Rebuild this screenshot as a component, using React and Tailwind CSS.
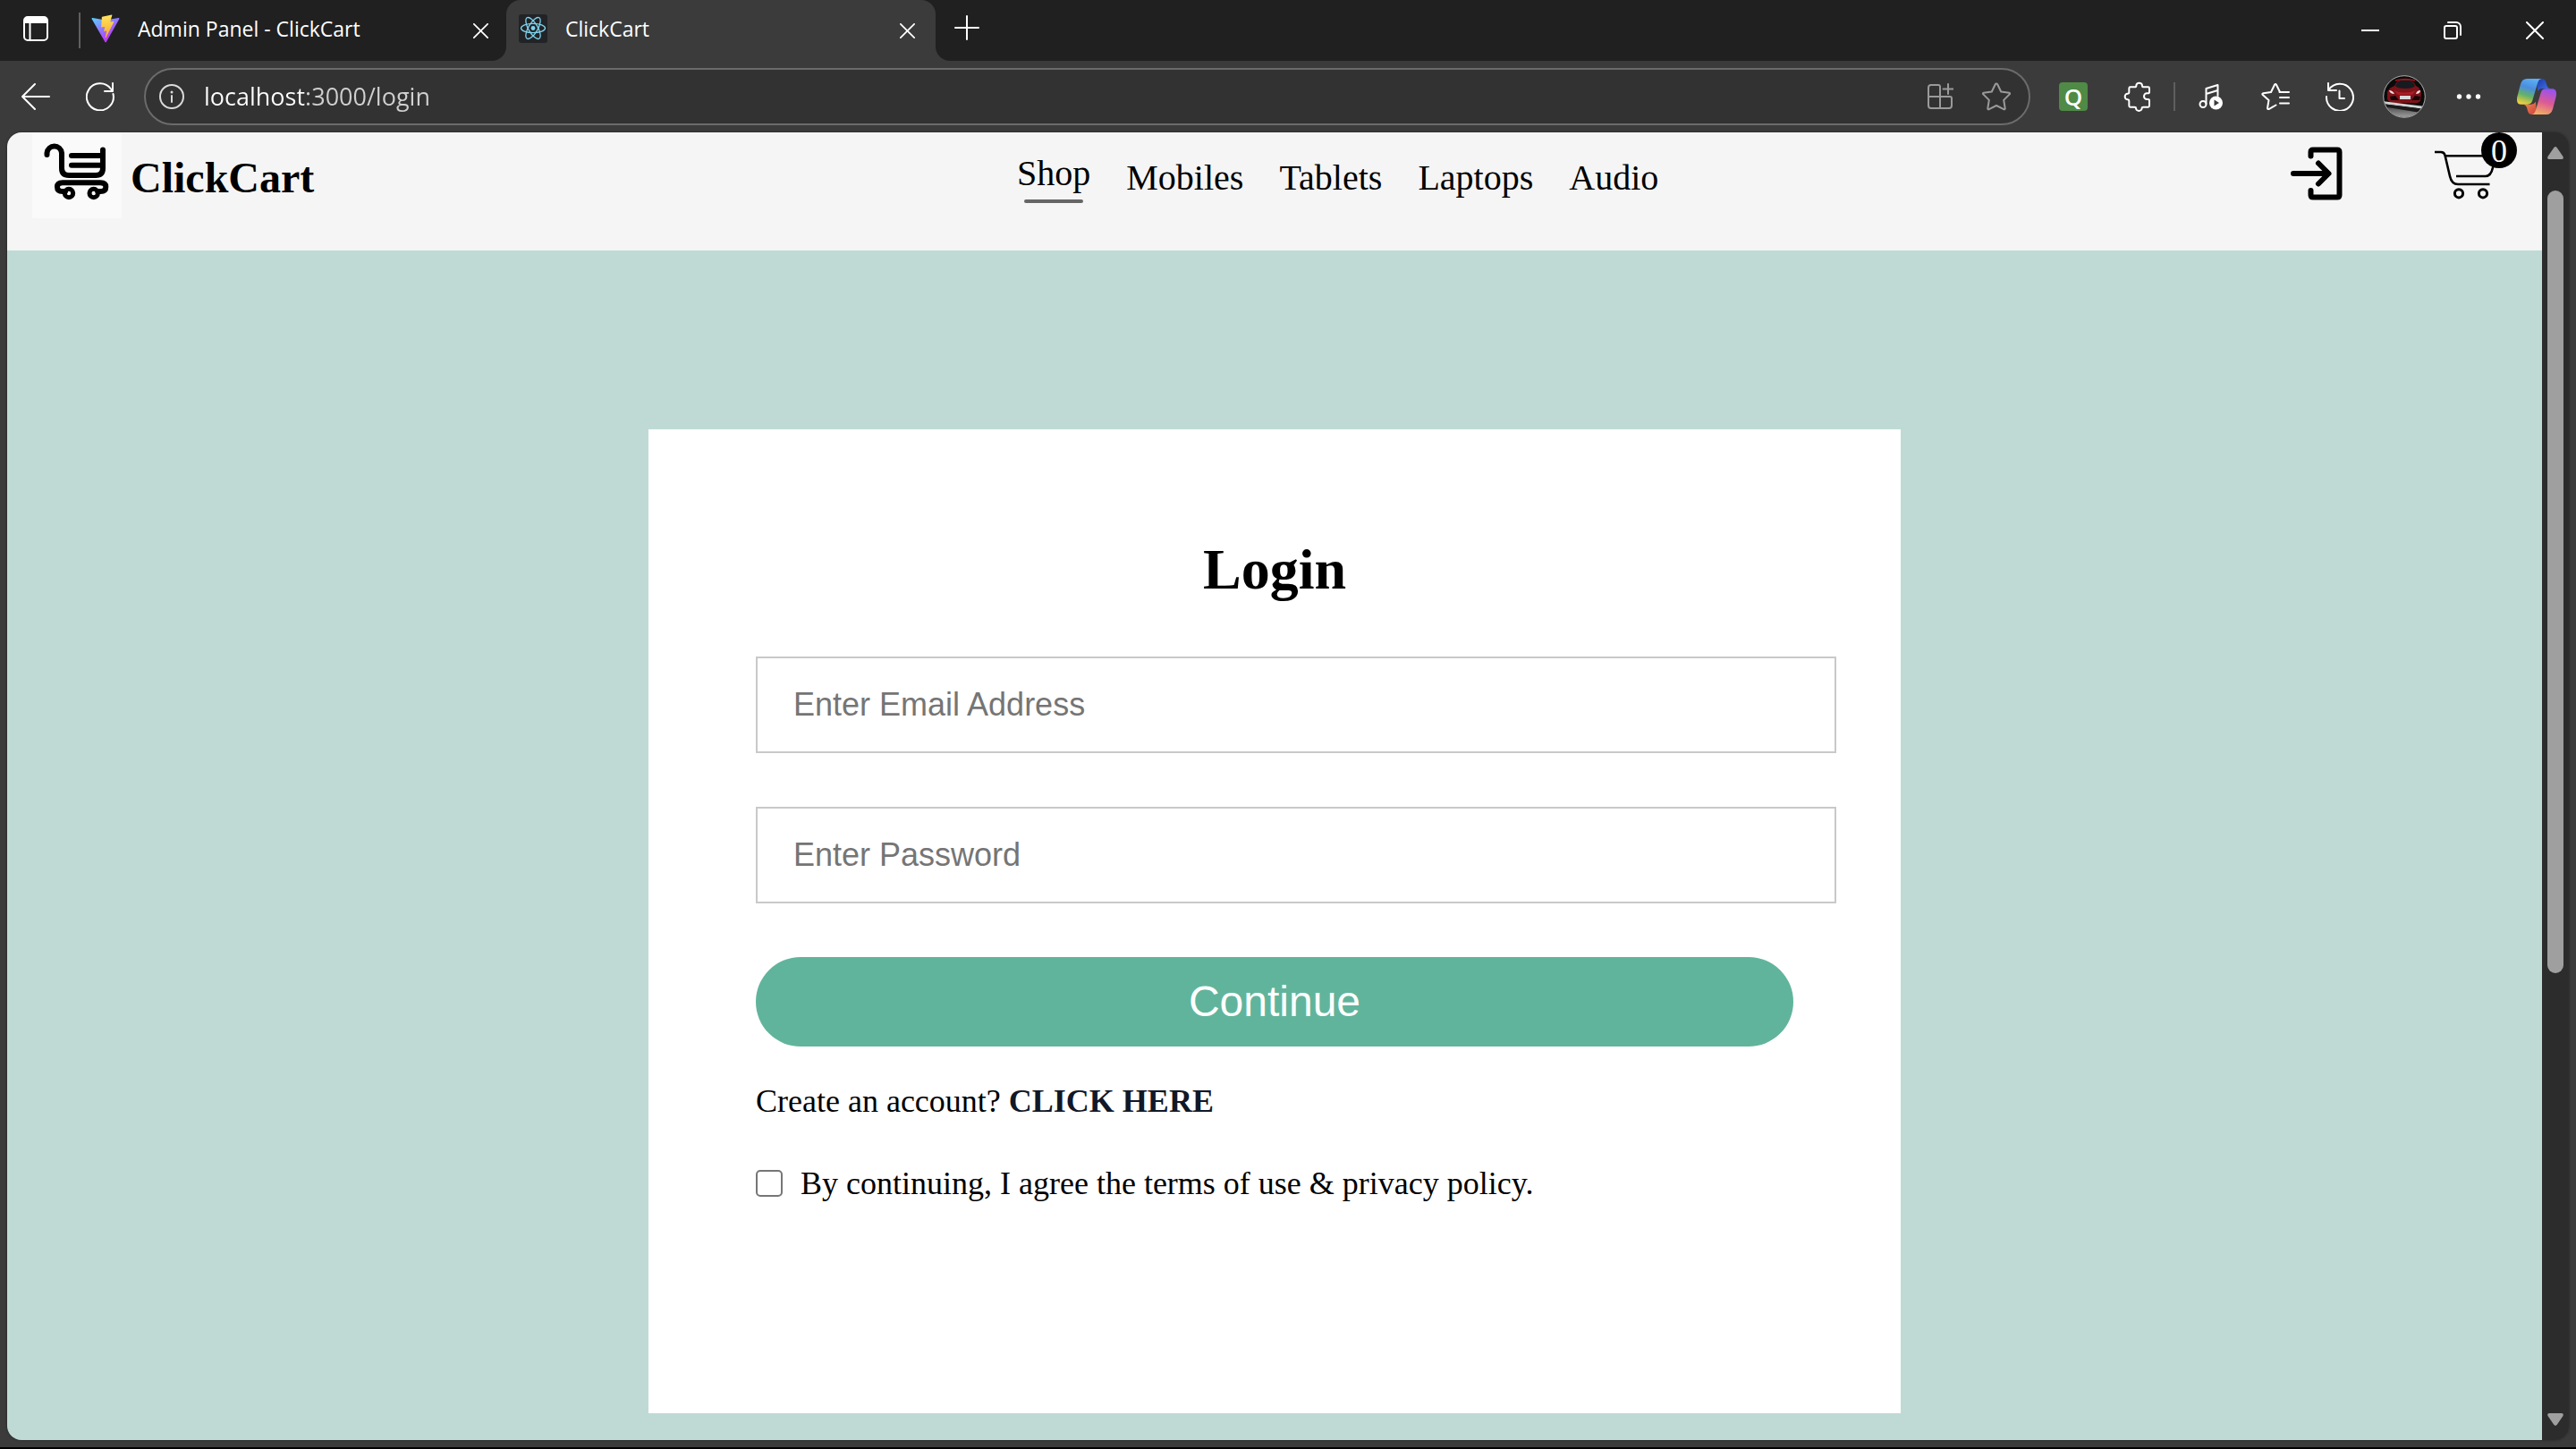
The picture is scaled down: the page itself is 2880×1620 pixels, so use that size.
import React from "react";

const line = {
  fill: "none",
  stroke: "currentColor",
  strokeLinecap: "round",
  strokeLinejoin: "round",
};

function WorkspacesIcon() {
  return (
    <svg width="28" height="28" viewBox="0 0 28 28" aria-hidden="true">
      <rect x="1" y="1" width="26" height="26" rx="4" {...line} strokeWidth="2" />
      <path d="M1 8V5a4 4 0 0 1 4-4h18a4 4 0 0 1 4 4v3z" fill="currentColor" />
      <path d="M7.500 8v19" {...line} strokeWidth="2" />
    </svg>
  );
}

function ViteIcon() {
  return (
    <svg width="32" height="32" viewBox="1.500 1.500 29 29" aria-hidden="true">
      <defs>
        <linearGradient id="vite-a" x1="6" x2="19" y1="5" y2="26" gradientUnits="userSpaceOnUse">
          <stop stopColor="#5cc8ff" />
          <stop offset="0.500" stopColor="#8f7bff" />
          <stop offset="1" stopColor="#b83bf6" />
        </linearGradient>
        <linearGradient id="vite-b" x1="16" x2="19" y1="3" y2="23" gradientUnits="userSpaceOnUse">
          <stop stopColor="#ffe25e" />
          <stop offset="1" stopColor="#f5ad2e" />
        </linearGradient>
      </defs>
      <path
        fill="url(#vite-a)"
        d="M29.8836 6.146L16.7418 29.6457c-.2714.4851-.9684.488-1.2437.0052L2.0956 6.1482c-.2999-.5262.1498-1.1635.746-1.057l13.156 2.3516a.7144.7144 0 0 0 .2537-.0004l12.8808-2.3478c.5942-.1083 1.0463.5241.7515 1.0513z"
      />
      <path
        fill="url(#vite-b)"
        d="M22.2644 2.0069l-9.7253 1.9056a.3571.3571 0 0 0-.2879.3294l-.5982 10.1038c-.014.238.2045.4227.4367.3691l2.7077-.6248c.2534-.0585.4823.1647.4302.4194l-.8044 3.9393c-.0542.265.1947.4918.4536.4132l1.6724-.5082c.2593-.0787.5084.1487.4536.414l-1.2784 6.1877c-.08.387.4348.598.6495.2662L16.5173 25 24.4415 9.1859c.1327-.2648-.096-.5667-.387-.5106l-2.7869.5379c-.262.0505-.4848-.1934-.4109-.4497l1.819-6.3054c.074-.2572-.15-.5013-.4113-.4512z"
      />
    </svg>
  );
}

function ReactIcon() {
  return (
    <svg width="32" height="32" viewBox="0 0 32 32" aria-hidden="true">
      <rect width="32" height="32" rx="3" fill="#222326" />
      <g transform="translate(16 15.500)" fill="none" stroke="#7fd3ee" strokeWidth="1.300">
        <circle r="2.400" fill="#7fd3ee" stroke="none" />
        <ellipse rx="13.500" ry="5.200" />
        <ellipse rx="13.500" ry="5.200" transform="rotate(60)" />
        <ellipse rx="13.500" ry="5.200" transform="rotate(120)" />
      </g>
    </svg>
  );
}

function CrossIcon({ size }) {
  return (
    <svg width={size} height={size} viewBox="0 0 20 20" aria-hidden="true">
      <path d="M1 1l18 18M19 1L1 19" {...line} strokeWidth="2" />
    </svg>
  );
}

function PlusIcon() {
  return (
    <svg width="28" height="28" viewBox="0 0 28 28" aria-hidden="true">
      <path d="M14 1v26M1 14h26" {...line} strokeWidth="2" />
    </svg>
  );
}

function MinimizeIcon() {
  return (
    <svg width="20" height="20" viewBox="0 0 20 20" aria-hidden="true">
      <path d="M0 10h20" stroke="currentColor" strokeWidth="2" />
    </svg>
  );
}

function RestoreIcon() {
  return (
    <svg width="20" height="20" viewBox="0 0 20 20" aria-hidden="true">
      <rect x="1" y="5" width="14" height="14" rx="2" {...line} strokeWidth="2" />
      <path d="M5 1h9a5 5 0 0 1 5 5v9" {...line} strokeWidth="2" />
    </svg>
  );
}

function BackIcon() {
  return (
    <svg width="32" height="32" viewBox="0 0 32 32" aria-hidden="true">
      <path d="M15 2L1 16l14 14M1 16h30" {...line} strokeWidth="2" />
    </svg>
  );
}

function RefreshIcon() {
  return (
    <svg width="32" height="32" viewBox="0 0 32 32" aria-hidden="true">
      <path d="M30.500 13A15 15 0 1 1 28 7.500l2 2.500M30 1v9h-9" {...line} strokeWidth="2" />
    </svg>
  );
}

function InfoIcon() {
  return (
    <svg width="28" height="28" viewBox="0 0 28 28" aria-hidden="true">
      <circle cx="14" cy="14" r="13" {...line} strokeWidth="2" />
      <path d="M14 13v7" {...line} strokeWidth="2" />
      <circle cx="14" cy="9" r="1.500" fill="currentColor" />
    </svg>
  );
}

function AppsIcon() {
  return (
    <svg width="30" height="30" viewBox="0 0 30 30" aria-hidden="true">
      <path
        d="M15 15H2V5a3 3 0 0 1 3-3h8a2 2 0 0 1 2 2zM15 15h11a2 2 0 0 1 2 2v8a3 3 0 0 1-3 3h-10zM2 15v10a3 3 0 0 0 3 3h10V15M24 1v11M18.500 6.500h11"
        {...line}
        strokeWidth="2"
      />
    </svg>
  );
}

function StarIcon() {
  return (
    <svg width="32" height="32" viewBox="0 0 32 32" aria-hidden="true">
      <path
        d="M16 1.500q.8 0 1.200.8l4 8.200 9 1.300q1.500.4.500 1.600l-6.500 6.500 1.500 9.200q.1 1.700-1.500 1.100L16 26l-8.200 4.200q-1.600.6-1.500-1.100l1.500-9.200-6.500-6.500q-1-1.200.5-1.600l9-1.300 4-8.200q.4-.8 1.200-.8z"
        {...line}
        strokeWidth="2"
      />
    </svg>
  );
}

function PuzzleIcon() {
  return (
    <svg width="32" height="34" viewBox="764 92 96 102" aria-hidden="true">
      <path
        d="M788 111h14q5 0 5-5a10 9 0 0 1 20 0q0 5 5 5h15q4 0 4 4v13q0 4-5 4h-3a10 10 0 0 0 0 20h3q5 0 5 4v18q0 4-4 4h-16q-5 0-5 4a10 9 0 0 1-20 0q0-4-5-4h-14q-4 0-4-4v-16q0-5-5-5a9 10 0 0 1 0-20q5 0 5-4v-14q0-4 4-4z"
        {...line}
        strokeWidth="6"
      />
    </svg>
  );
}

function MusicIcon() {
  return (
    <svg width="28" height="30" viewBox="0 0 28 30" aria-hidden="true">
      <circle cx="5" cy="23.500" r="3.500" {...line} strokeWidth="2" />
      <path d="M8.500 23V6l13-4v12M8.500 12l13-4" {...line} strokeWidth="2" />
      <circle cx="19.500" cy="22" r="7.500" fill="currentColor" />
      <path d="M17.500 18.500v7l5.500-3.500z" fill="#3b3b3b" />
    </svg>
  );
}

function FavoritesIcon() {
  return (
    <svg width="32" height="32" viewBox="0 0 32 32" aria-hidden="true">
      <path
        d="M16.500 25.500L9 29.800q-2.200.9-1.900-1.300L8.500 20 1.700 14q-1-1.400.8-1.800l8.500-1.200L15 2.800q1-1.600 2 0l3.800 7.700"
        {...line}
        strokeWidth="2"
      />
      <path d="M20.500 11H31M21 17h10M21 23.500h10" {...line} strokeWidth="2" />
    </svg>
  );
}

function HistoryIcon() {
  return (
    <svg width="32" height="32" viewBox="0 0 32 32" aria-hidden="true">
      <path d="M3 1v8h9M3.500 8.500A15 15 0 1 1 1 16M15.500 9.500V18H21" {...line} strokeWidth="2" />
    </svg>
  );
}

function AvatarIcon() {
  return (
    <svg width="48" height="48" viewBox="0 0 48 48" aria-hidden="true">
      <defs>
        <clipPath id="avatar-clip">
          <circle cx="24" cy="24" r="23" />
        </clipPath>
        <linearGradient id="avatar-road" x1="0" y1="0" x2="0" y2="1">
          <stop stopColor="#4a4a4a" />
          <stop offset="1" stopColor="#a5a5a5" />
        </linearGradient>
      </defs>
      <g clipPath="url(#avatar-clip)">
        <rect width="48" height="48" fill="#0a0a0a" />
        <path d="M5 19q2-5 8-7 3-6 7-7h10q5 2 7 7 5 2 6 8l-1 9q-3 3-8 2H13q-6 0-8-4z" fill="#7d1219" />
        <path d="M14 12q2-5 6-6h10q4 1 6 6-2 3-11 3t-11-3z" fill="#161b20" />
        <path d="M14 6q11-3 22 0" stroke="#a3161f" strokeWidth="1.500" fill="none" />
        <path d="M12 17q12 5 25 0l-4 5H17z" fill="#a91c25" />
        <path d="M7 17q4 0 6 4-5 0-6-4zM42 17q-4 0-5 4 5 0 5-4z" fill="#f1dfdf" />
        <path d="M8 24l6-1 4 5H9zM42 24l-6-1-4 5h9z" fill="#150507" />
        <rect x="19" y="23" width="12" height="4" fill="#d8d8d8" />
        <path d="M0 29l48 6v3L0 32z" fill="#d0d0d0" />
        <path d="M0 32l48 6v5L0 35z" fill="#1b1b1b" />
        <path d="M0 35l48 8v5H0z" fill="url(#avatar-road)" />
      </g>
      <circle cx="24" cy="24" r="23.300" fill="none" stroke="#a9a9a9" strokeWidth="1" />
    </svg>
  );
}

function MoreIcon() {
  return (
    <svg width="28" height="8" viewBox="0 0 28 8" aria-hidden="true" fill="currentColor">
      <circle cx="3.500" cy="4" r="2.700" />
      <circle cx="14" cy="4" r="2.700" />
      <circle cx="24.500" cy="4" r="2.700" />
    </svg>
  );
}

function CopilotIcon() {
  return (
    <svg width="44" height="40" viewBox="0 0 132 120" aria-hidden="true">
      <defs>
        <linearGradient id="cp-left" x1="0.600" y1="0" x2="0.300" y2="1">
          <stop stopColor="#5cb0f2" />
          <stop offset="0.350" stopColor="#4a8de0" />
          <stop offset="0.650" stopColor="#62b06c" />
          <stop offset="1" stopColor="#f0cf3c" />
        </linearGradient>
        <linearGradient id="cp-right" x1="0.600" y1="0" x2="0.300" y2="1">
          <stop stopColor="#9a52ee" />
          <stop offset="0.500" stopColor="#dd5a94" />
          <stop offset="1" stopColor="#f3b060" />
        </linearGradient>
        <linearGradient id="cp-top" x1="0" y1="0" x2="1" y2="1">
          <stop stopColor="#1f35a8" />
          <stop offset="1" stopColor="#3f7df0" />
        </linearGradient>
        <linearGradient id="cp-bottom" x1="0" y1="0" x2="1" y2="1">
          <stop stopColor="#f0914f" />
          <stop offset="1" stopColor="#cf3f3f" />
        </linearGradient>
      </defs>
      <path d="M66 0h18q9 0 12 9l5 15q3 9 12 9H84q-9 0-14 10z" fill="url(#cp-top)" />
      <path d="M66 120H50q-10 0-13-9l-4-14q-3-10-14-11h28q10 0 16-9z" fill="url(#cp-bottom)" />
      <path d="M34 0h48q-9 2-12 12L52 73q-4 13-16 13H14Q-4 86 1 60L12 18Q17 0 34 0z" fill="url(#cp-left)" />
      <path d="M98 120H50q9-2 12-12l18-61q4-13 16-13h22q18 0 13 26l-11 42q-5 18-22 18z" fill="url(#cp-right)" />
    </svg>
  );
}

function CartLogo() {
  return (
    <svg width="100" height="96" viewBox="0 0 100 96" role="img" aria-label="ClickCart logo">
      <rect width="100" height="96" fill="#fafafa" />
      <g fill="none" stroke="#000" strokeWidth="6" strokeLinecap="round" strokeLinejoin="round">
        <path d="M16.500 25v-2a8.300 8.300 0 0 1 16.500 0v17q0 8 8 8h30q8 0 8-8V19.500" />
        <path d="M44 26h32q3 0 3-3M44 36.700h32q3 0 3-3" />
        <path d="M37 66h-3q-6 0-6-5 0-4.700 6-4.700h42.300q6 0 6 4.700 0 5-6 5h-3" />
        <circle cx="41" cy="68" r="4.700" strokeWidth="5" />
        <circle cx="68.700" cy="68" r="4.700" strokeWidth="5" />
      </g>
    </svg>
  );
}

function LoginIcon() {
  return (
    <svg width="60" height="60" viewBox="0 0 60 60" aria-hidden="true">
      <g fill="none" stroke="#000" strokeWidth="6" strokeLinecap="round" strokeLinejoin="round">
        <path d="M23.500 10.500V6q0-2.500 2.500-2.500h27q2.500 0 2.500 2.500v48q0 2.500-2.500 2.500H26q-2.500 0-2.500-2.500v-5" />
        <path d="M4 30h38M32 18.500L43.500 30 32 41.500" />
      </g>
    </svg>
  );
}

function CartIcon() {
  return (
    <svg width="70" height="58" viewBox="0 0 70 58" aria-hidden="true">
      <g fill="none" stroke="#000" strokeWidth="2.600">
        <path d="M0 4h7q3.500 0 4.500 3.500L17 31q2 9 9 9h35.500" />
        <path d="M12 8.300h57l-4 13q-2 9.700-8 9.700H24" />
        <circle cx="27" cy="50.300" r="4.600" strokeWidth="3" />
        <circle cx="54" cy="50.300" r="4.600" strokeWidth="3" />
      </g>
    </svg>
  );
}

function ToolButton({ label, children, wide }) {
  return (
    <button
      type="button"
      aria-label={label}
      className={
        wide
          ? "flex h-16 w-20 items-center justify-center"
          : "flex h-16 w-18 items-center justify-center"
      }
    >
      {children}
    </button>
  );
}

function TabStrip() {
  return (
    <div className="flex h-[68px] items-stretch bg-[#202020] text-[23px] text-white">
      <button type="button" aria-label="Tab actions" className="flex w-[88px] items-center pb-1 pl-[26px]">
        <WorkspacesIcon />
      </button>
      <div className="h-10 w-[2px] self-center bg-[#5f5f5f]" />
      <div className="flex w-[476px] items-center gap-5 pr-5 pb-1 pl-3">
        <ViteIcon />
        <span className="flex-1 truncate">Admin Panel - ClickCart</span>
        <button type="button" aria-label="Close Admin Panel tab" className="pt-1">
          <CrossIcon size="17" />
        </button>
      </div>
      <div className="relative flex w-[480px] items-center gap-5 rounded-t-2xl bg-[#3b3b3b] pr-[23px] pb-1 pl-[14px]">
        <span className="absolute bottom-0 -left-4 size-4 bg-[#3b3b3b]">
          <span className="block size-4 rounded-br-2xl bg-[#202020]" />
        </span>
        <span className="absolute -right-4 bottom-0 size-4 bg-[#3b3b3b]">
          <span className="block size-4 rounded-bl-2xl bg-[#202020]" />
        </span>
        <ReactIcon />
        <span className="flex-1 truncate">ClickCart</span>
        <button type="button" aria-label="Close ClickCart tab" className="pt-1">
          <CrossIcon size="17" />
        </button>
      </div>
      <button type="button" aria-label="New tab" className="flex w-[70px] items-center justify-center pb-[6px]">
        <PlusIcon />
      </button>
      <div className="ml-auto flex">
        <button type="button" aria-label="Minimize" className="flex w-[92px] items-center justify-center">
          <MinimizeIcon />
        </button>
        <button type="button" aria-label="Restore" className="flex w-[92px] items-center justify-center">
          <RestoreIcon />
        </button>
        <button type="button" aria-label="Close window" className="flex w-[92px] items-center justify-center">
          <CrossIcon size="20" />
        </button>
      </div>
    </div>
  );
}

function Toolbar() {
  return (
    <div className="flex h-20 items-center bg-[#3b3b3b] px-1 text-white">
      <ToolButton label="Back">
        <BackIcon />
      </ToolButton>
      <ToolButton label="Refresh">
        <RefreshIcon />
      </ToolButton>
      <div className="ml-[13px] flex h-16 flex-1 items-center rounded-full border-2 border-[#6b6b6b] bg-[#323232] pr-5 pl-[15px]">
        <button type="button" aria-label="Site information" className="text-[#dadada]">
          <InfoIcon />
        </button>
        <input
          type="text"
          aria-label="Address"
          defaultValue="localhost:3000/login"
          className="ml-[22px] min-w-0 flex-1 bg-linear-to-r from-white from-[112px] to-[#d0d0d0] to-[112px] bg-clip-text text-[27px] text-transparent outline-none"
        />
        <button type="button" aria-label="Install app" className="text-[#9a9a9a]">
          <AppsIcon />
        </button>
        <button type="button" aria-label="Add to favorites" className="ml-8 text-[#9a9a9a]">
          <StarIcon />
        </button>
      </div>
      <div className="ml-3 flex items-center">
        <ToolButton label="Q extension">
          <span className="flex size-8 items-center justify-center rounded-sm bg-[#4f8a46] text-[26px] leading-8 font-semibold">
            Q
          </span>
        </ToolButton>
        <ToolButton label="Extensions">
          <PuzzleIcon />
        </ToolButton>
        <div className="mx-1 h-8 w-[2px] bg-[#5f5f5f]" />
        <ToolButton label="Media">
          <MusicIcon />
        </ToolButton>
        <ToolButton label="Favorites">
          <FavoritesIcon />
        </ToolButton>
        <ToolButton label="History">
          <HistoryIcon />
        </ToolButton>
        <ToolButton label="Profile">
          <AvatarIcon />
        </ToolButton>
        <ToolButton label="Settings and more">
          <MoreIcon />
        </ToolButton>
        <ToolButton label="Copilot" wide>
          <CopilotIcon />
        </ToolButton>
      </div>
    </div>
  );
}

function SiteHeader() {
  return (
    <header className="flex h-[132px] items-center justify-between bg-[#f5f5f5] px-7 pb-[30px]">
      <a href="#home" className="flex items-center gap-[10px] self-start">
        <CartLogo />
        <span className="pt-[6px] text-[48px] leading-[56px] font-bold text-black">ClickCart</span>
      </a>
      <nav className="ml-20 flex items-center gap-10 text-[40px] leading-[46px] text-black">
        <a href="#shop" aria-current="page" className="flex flex-col items-center gap-[6px]">
          Shop
          <span className="h-1 w-4/5 rounded-full bg-[#666666]" />
        </a>
        <a href="#mobiles">Mobiles</a>
        <a href="#tablets">Tablets</a>
        <a href="#laptops">Laptops</a>
        <a href="#audio">Audio</a>
      </nav>
      <div className="flex items-start gap-[102px] self-start">
        <a href="#login" aria-label="Login" className="pt-4">
          <LoginIcon />
        </a>
        <a href="#cart" aria-label="Cart" className="relative w-[92px] pt-[18px]">
          <CartIcon />
          <span className="absolute top-0 right-0 flex size-10 items-center justify-center rounded-full bg-black pt-[2px] text-[36px] leading-10 text-white">
            0
          </span>
        </a>
      </div>
    </header>
  );
}

function Field({ type, placeholder }) {
  return (
    <input
      type={type}
      aria-label={placeholder}
      placeholder={placeholder}
      className="h-[108px] w-[calc(100%+48px)] border-2 border-[#c9c9c9] bg-white pl-10 font-['Liberation_Sans',Arial,sans-serif] text-[36px] text-black outline-none placeholder:text-[#757575]"
    />
  );
}

function LoginPage() {
  return (
    <main className="flex flex-1 flex-col items-center bg-[#bfdad5] pt-[200px] pb-[30px]">
      <form
        className="min-h-[1100px] w-full max-w-[1400px] bg-white p-[120px] text-[36px] leading-[42px] text-black"
        onSubmit={(e) => e.preventDefault()}
      >
        <h1 className="text-center text-[64px] leading-[74px] font-bold">Login</h1>
        <div className="mt-[60px] flex flex-col gap-[60px]">
          <Field type="email" placeholder="Enter Email Address" />
          <Field type="password" placeholder="Enter Password" />
          <button
            type="submit"
            className="h-[100px] w-full rounded-full bg-[#61b49c] font-['Liberation_Sans',Arial,sans-serif] text-[48px] text-white"
          >
            Continue
          </button>
        </div>
        <p className="mt-10">
          Create an account?{" "}
          <a href="#signup" className="font-bold text-[#111827]">
            CLICK HERE
          </a>
        </p>
        <label className="mt-[50px] flex items-center gap-5">
          <input
            type="checkbox"
            className="size-[30px] appearance-none rounded-[5px] border-2 border-[#767676] bg-white"
          />
          By continuing, I agree the terms of use &amp; privacy policy.
        </label>
      </form>
    </main>
  );
}

function Scrollbar() {
  return (
    <div className="flex w-[30px] flex-col items-center bg-[#2c2c2c] py-4" aria-hidden="true">
      <svg width="18" height="14" viewBox="0 0 18 14">
        <path d="M7.200 1.200q1.800-2.200 3.600 0l6.700 9.800q1 3-1.500 3H2q-2.500 0-1.500-3z" fill="#9f9f9f" />
      </svg>
      <div className="mt-[35px] flex w-[18px] flex-1 flex-col">
        <div className="h-[64%] rounded-full bg-[#9f9f9f]" />
      </div>
      <svg width="18" height="14" viewBox="0 0 18 14">
        <path d="M7.200 12.800q1.800 2.200 3.600 0l6.700-9.800q1-3-1.500-3H2q-2.500 0-1.500 3z" fill="#9f9f9f" />
      </svg>
    </div>
  );
}

export default function App() {
  return (
    <div className="flex min-h-screen flex-col border-b-2 border-black bg-[#3b3b3b] font-['Open_Sans','Noto_Sans',sans-serif]">
      <TabStrip />
      <Toolbar />
      <div className="mx-2 mb-2 flex flex-1 overflow-hidden rounded-2xl shadow-[0_0_3px_#00000066]">
        <div className="flex min-w-0 flex-1 flex-col font-['Liberation_Serif','Times_New_Roman',serif]">
          <SiteHeader />
          <LoginPage />
        </div>
        <Scrollbar />
      </div>
    </div>
  );
}
